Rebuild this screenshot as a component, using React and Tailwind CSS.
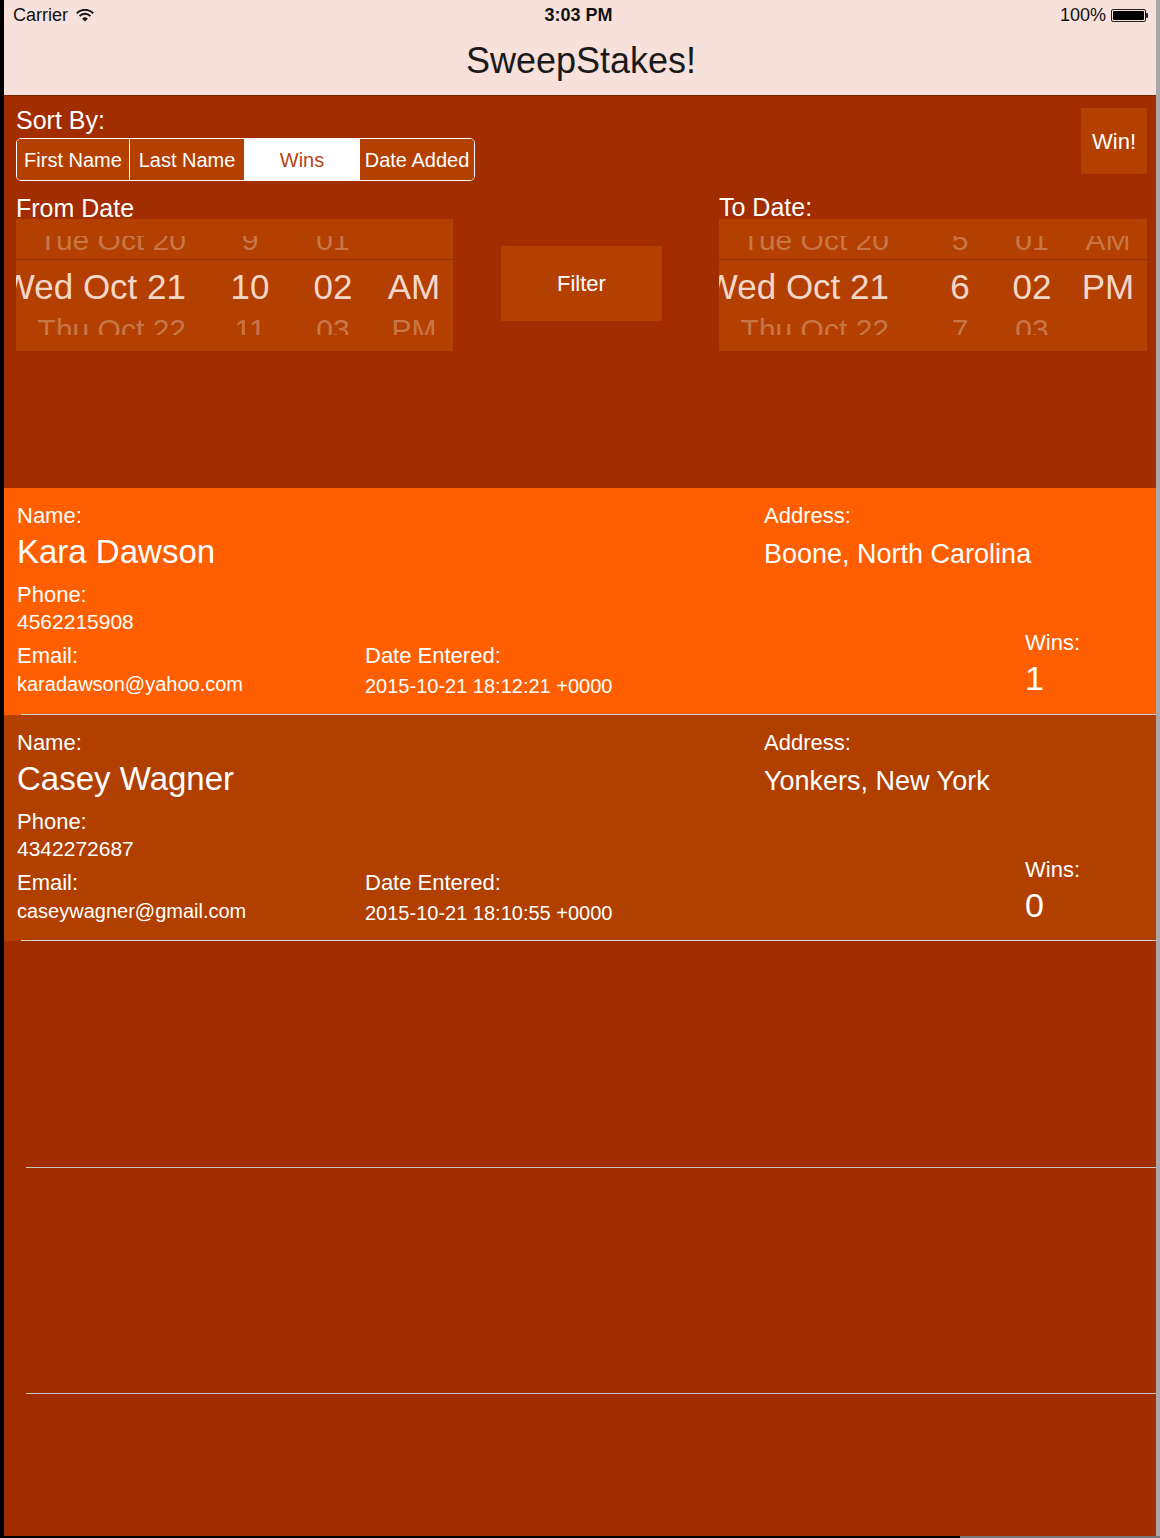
import React from "react";

const fromCols = [
  "w-[170px] justify-end",
  "ml-[34px] w-[60px] justify-center",
  "ml-[23px] w-[60px] justify-center",
  "ml-[21px] w-[60px] justify-center",
];

const toCols = [
  "w-[170px] justify-end",
  "ml-[41px] w-[60px] justify-center",
  "ml-[12px] w-[60px] justify-center",
  "ml-[16px] w-[60px] justify-center",
];

const people = [
  {
    name: "Kara Dawson",
    phone: "4562215908",
    email: "karadawson@yahoo.com",
    date: "2015-10-21 18:12:21 +0000",
    address: "Boone, North Carolina",
    wins: "1",
    bg: "bg-[#FF5F00]",
    h: "h-[227px]",
  },
  {
    name: "Casey Wagner",
    phone: "4342272687",
    email: "caseywagner@gmail.com",
    date: "2015-10-21 18:10:55 +0000",
    address: "Yonkers, New York",
    wins: "0",
    bg: "bg-[#B03F00]",
    h: "h-[226px]",
  },
];

const PickerRow = ({ cols, values }) => (
  <>
    {values.map((v, i) => (
      <div key={i} className={"flex whitespace-nowrap " + cols[i]}>
        {v}
      </div>
    ))}
  </>
);

const Picker = ({ cols, top, mid, bot }) => (
  <div className="h-[132px] overflow-hidden bg-[#B33F00]">
    <div className="h-[40px] pt-[17px]">
      <div className="h-[17px] overflow-hidden">
        <div className="flex -mt-[10px] text-[30px] leading-[30px] text-white/30 scale-y-[0.9]">
          <PickerRow cols={cols} values={top} />
        </div>
      </div>
    </div>
    <div className="flex h-[54px] border-t border-[#962f00] text-[35px] leading-[53px] text-[#F3D8CA]">
      <PickerRow cols={cols} values={mid} />
    </div>
    <div className="h-[38px] pt-[3px]">
      <div className="h-[19px] overflow-hidden">
        <div className="flex -mt-[1px] text-[30px] leading-[30px] text-white/30">
          <PickerRow cols={cols} values={bot} />
        </div>
      </div>
    </div>
  </div>
);

const PersonCell = ({ p }) => (
  <div className={"flex flex-col text-white " + p.bg + " " + p.h}>
    <div className="flex flex-1 pl-[13px]">
      <div className="w-[348px] flex flex-col pt-[15px] whitespace-nowrap">
        <div className="h-[26px] leading-[26px] text-[22px]">Name:</div>
        <div className="mt-[3px] h-[40px] leading-[40px] text-[33px]">{p.name}</div>
        <div className="mt-[10px] h-[26px] leading-[26px] text-[22px]">Phone:</div>
        <div className="mt-[1px] h-[26px] leading-[26px] text-[21px]">{p.phone}</div>
        <div className="mt-[8px] h-[26px] leading-[26px] text-[22px]">Email:</div>
        <div className="mt-[2px] h-[26px] leading-[26px] text-[20px]">{p.email}</div>
      </div>
      <div className="w-[399px] flex flex-col pt-[155px] whitespace-nowrap">
        <div className="h-[26px] leading-[26px] text-[22px]">Date Entered:</div>
        <div className="mt-[4px] h-[26px] leading-[26px] text-[20px]">{p.date}</div>
      </div>
      <div className="w-[261px] flex flex-col pt-[15px] whitespace-nowrap">
        <div className="h-[26px] leading-[26px] text-[22px]">Address:</div>
        <div className="mt-[7px] h-[36px] leading-[36px] text-[27px]">{p.address}</div>
      </div>
      <div className="flex flex-col pt-[142px] whitespace-nowrap">
        <div className="h-[26px] leading-[26px] text-[22px]">Wins:</div>
        <div className="mt-[2px] h-[40px] leading-[40px] text-[34px]">{p.wins}</div>
      </div>
    </div>
    <div className="ml-[17px] h-px bg-[#D6CFCB]" />
  </div>
);

const EmptyRow = ({ h }) => (
  <div className={"flex flex-col " + h}>
    <div className="flex-1" />
    <div className="ml-[22px] h-px bg-[#C9C4C2]" />
  </div>
);

const Wifi = () => (
  <svg width="18" height="13" viewBox="0 0 18 13">
    <path d="M0.8 4.3 A11.5 11.5 0 0 1 17.2 4.3" fill="none" stroke="#111" strokeWidth="2" />
    <path d="M3.6 7.1 A7.6 7.6 0 0 1 14.4 7.1" fill="none" stroke="#111" strokeWidth="2" />
    <path d="M9 12.6 L6.2 9.7 A4 4 0 0 1 11.8 9.7 Z" fill="#111" />
  </svg>
);

const Battery = () => (
  <div className="flex items-center">
    <div className="w-[35px] h-[13px] rounded-[2px] border border-[#222] p-[1px]">
      <div className="w-full h-full bg-black rounded-[1px]" />
    </div>
    <div className="w-[2px] h-[5px] bg-[#222] rounded-r-[1px]" />
  </div>
);

export default function App() {
  return (
    <div className="w-[1160px] h-[1538px] bg-black flex flex-col font-['Liberation_Sans',Arial,sans-serif]">
      <div className="flex h-[1536px]">
        <div className="w-[4px] bg-black" />
        <div className="w-[1152px] flex flex-col bg-[#A12D00]">
          {/* nav bar */}
          <div className="h-[96px] bg-[#F7E1DA] flex flex-col border-b border-[#7A2200]">
            <div className="h-[30px] flex items-center justify-between pl-[9px] pr-[8px] text-[#111]">
              <div className="flex items-center w-[200px] gap-[8px]">
                <span className="text-[18px] leading-[20px]">Carrier</span>
                <Wifi />
              </div>
              <div className="text-[18px] font-bold leading-[20px] ml-[-4px]">3:03 PM</div>
              <div className="flex items-center justify-end w-[200px] gap-[5px]">
                <span className="text-[18px] leading-[20px]">100%</span>
                <Battery />
              </div>
            </div>
            <div className="flex-1 flex items-center justify-center pb-[3px] pl-[2px]">
              <span className="text-[36px] leading-[40px] font-light text-[#1a1a1a]">SweepStakes!</span>
            </div>
          </div>

          {/* controls */}
          <div className="h-[392px] pl-[12px] pr-[9px] text-white">
            <div className="flex justify-between">
              <div className="pt-[9px]">
                <div className="h-[33px] text-[25px] leading-[30px]">Sort By:</div>
                <div className="flex w-[459px] h-[43px] rounded-[5px] border border-white overflow-hidden text-[20px]">
                  <div className="w-[112px] flex items-center justify-center bg-[#B33F00]">First Name</div>
                  <div className="w-[115px] flex items-center justify-center bg-[#B33F00] border-l border-white">Last Name</div>
                  <div className="w-[115px] flex items-center justify-center bg-white text-[#B84412] border-l border-white">Wins</div>
                  <div className="flex-1 flex items-center justify-center bg-[#B33F00] border-l border-white">Date Added</div>
                </div>
              </div>
              <button className="mt-[12px] w-[66px] h-[66px] bg-[#B33F00] text-white text-[22px]">Win!</button>
            </div>

            <div className="flex">
              <div className="w-[437px]">
                <div className="h-[38px] pt-[13px] text-[25px] leading-[28px]">From Date</div>
                <Picker
                  cols={fromCols}
                  top={["Tue Oct 20", "9", "01", ""]}
                  mid={["Wed Oct 21", "10", "02", "AM"]}
                  bot={["Thu Oct 22", "11", "03", "PM"]}
                />
              </div>
              <div className="ml-[48px] w-[161px] pt-[65px]">
                <button className="w-full h-[75px] bg-[#B33F00] text-white text-[22px]">Filter</button>
              </div>
              <div className="ml-[57px] w-[428px]">
                <div className="h-[38px] pt-[12px] text-[25px] leading-[28px]">To Date:</div>
                <Picker
                  cols={toCols}
                  top={["Tue Oct 20", "5", "01", "AM"]}
                  mid={["Wed Oct 21", "6", "02", "PM"]}
                  bot={["Thu Oct 22", "7", "03", ""]}
                />
              </div>
            </div>
          </div>

          {/* table */}
          {people.map((p) => (
            <PersonCell key={p.name} p={p} />
          ))}
          <EmptyRow h="h-[227px]" />
          <EmptyRow h="h-[226px]" />
          <div className="flex-1" />
        </div>
        <div className="w-[4px] bg-[#A8A8A8]" />
      </div>
      <div className="flex h-[2px]">
        <div className="w-[960px] bg-black" />
        <div className="flex-1 bg-[#777]" />
      </div>
    </div>
  );
}
